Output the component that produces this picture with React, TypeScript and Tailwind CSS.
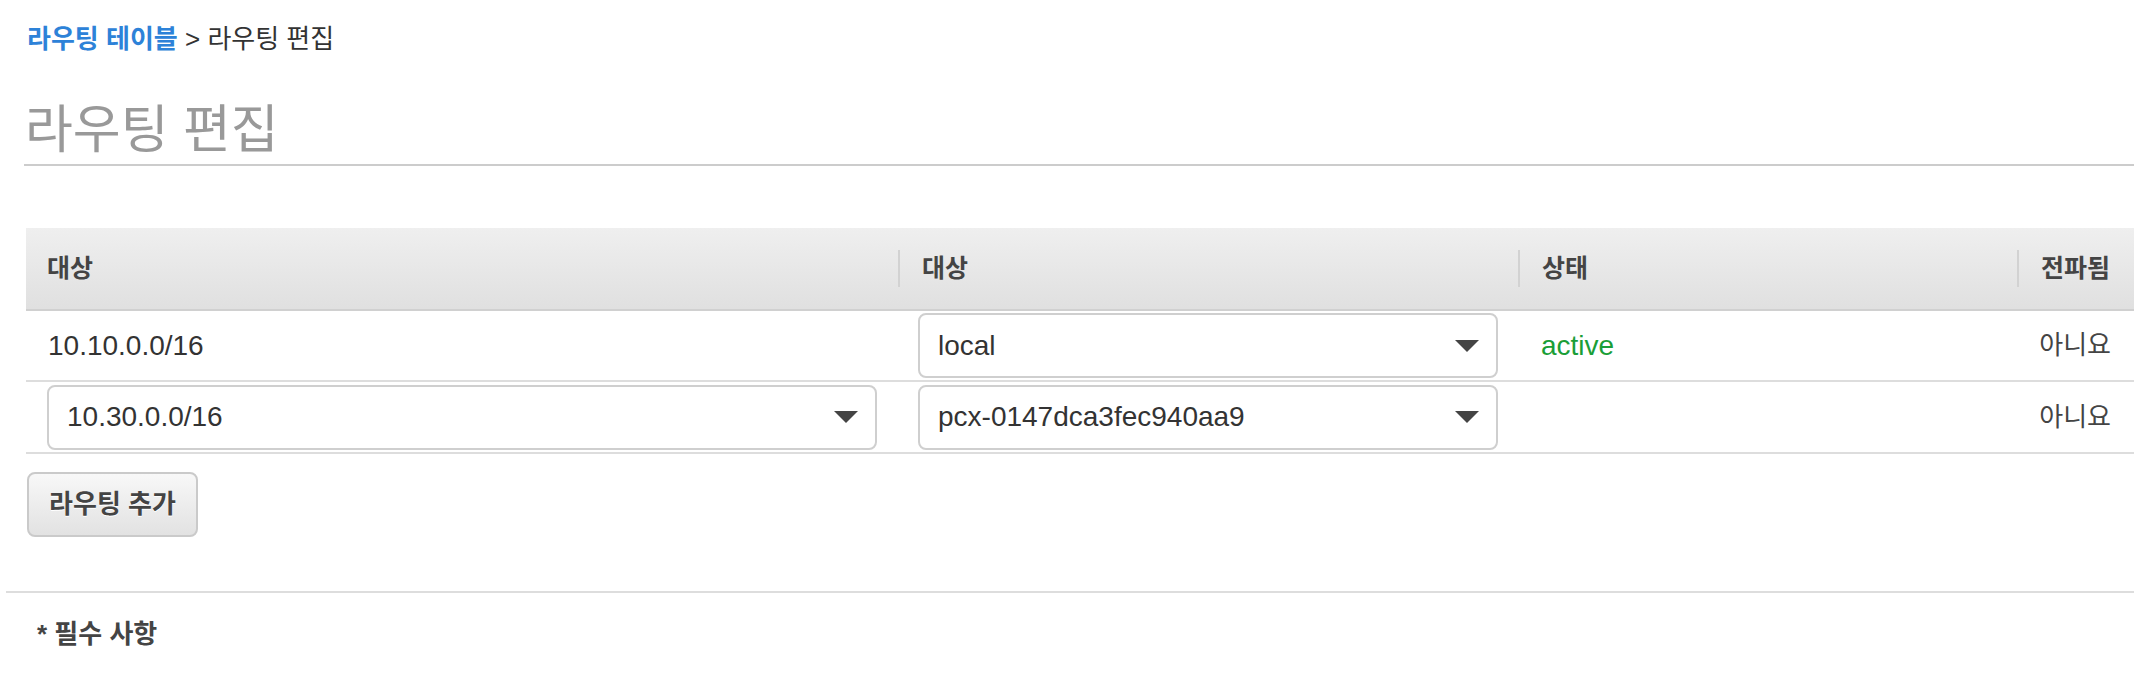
import React from "react";

const FONT = "font-['Liberation_Sans','Noto_Sans_CJK_KR',sans-serif]";

const Arrow = () => (
  <svg width="24" height="12" viewBox="0 0 24 12" className="shrink-0">
    <path d="M0 0 H24 L12 12 Z" fill="#444" />
  </svg>
);

const SelectBox = ({ value }: { value: string }) => (
  <div className="flex h-[65px] w-full items-center justify-between rounded-[8px] border-2 border-[#cfcfcf] bg-white pl-[18px] pr-[17px] text-[28px] text-[#333]">
    <span>{value}</span>
    <Arrow />
  </div>
);

const HeaderCell = ({ label, divider }: { label: string; divider?: boolean }) => (
  <div className="flex items-center">
    {divider && <span className="h-[37px] w-[2px] bg-[#d2d2d2]" />}
    <span className={divider ? "ml-[22px]" : "ml-[21px]"}>{label}</span>
  </div>
);

const COLS = "grid grid-cols-[872px_620px_499px_117px]";

export default function App() {
  return (
    <div className={`h-[674px] w-[2134px] overflow-hidden bg-white text-[#444] ${FONT}`}>
      <div className="pl-[24px]">
        {/* Breadcrumb */}
        <nav className="pl-[3px] pt-[23px] text-[26px] leading-[32px]">
          <span className="font-bold text-[#2d82d8]">라우팅 테이블</span>
          <span className="text-[#333]"> &gt; 라우팅 편집</span>
        </nav>
        <h1 className="mt-[43px] border-b-2 border-[#cccccc] pb-[2px] pl-[1px] text-[52px] leading-[64px] font-normal text-[#999]">
          라우팅 편집
        </h1>
      </div>

      {/* Routes table */}
      <div className="ml-[26px] mt-[62px]">
        <div className={`${COLS} h-[83px] border-b-2 border-[#d0d0d0] bg-linear-to-b from-[#efefef] to-[#e0e0e0] text-[25px] font-bold text-[#444]`}>
          <HeaderCell label="대상" />
          <HeaderCell label="대상" divider />
          <HeaderCell label="상태" divider />
          <HeaderCell label="전파됨" divider />
        </div>

        <div className={`${COLS} h-[71px] items-center border-b-2 border-[#dddddd]`}>
          <div className="pl-[22px] text-[28px] text-[#333]">10.10.0.0/16</div>
          <div className="px-[20px]">
            <SelectBox value="local" />
          </div>
          <div className="pl-[23px] text-[28px] text-[#1a9e37]">active</div>
          <div className="pr-[23px] text-right text-[26px] text-[#444]">아니요</div>
        </div>

        <div className={`${COLS} h-[72px] items-center border-b-2 border-[#dddddd]`}>
          <div className="pl-[21px] pr-[21px]">
            <SelectBox value="10.30.0.0/16" />
          </div>
          <div className="px-[20px]">
            <SelectBox value="pcx-0147dca3fec940aa9" />
          </div>
          <div />
          <div className="pr-[23px] text-right text-[26px] text-[#444]">아니요</div>
        </div>

        <button className="ml-[1px] mt-[18px] h-[65px] w-[171px] rounded-[8px] border-2 border-[#cacaca] bg-linear-to-b from-[#f8f8f8] to-[#e2e2e2] text-[26px] font-bold text-[#444] [text-shadow:0_1px_0_#fff]">
          라우팅 추가
        </button>
      </div>

      {/* Footer */}
      <div className="ml-[6px] mt-[54px] border-t-2 border-[#dddddd] pl-[31px] pt-[25px] text-[26px] leading-[32px] font-bold text-[#444]">
        * 필수 사항
      </div>
    </div>
  );
}
